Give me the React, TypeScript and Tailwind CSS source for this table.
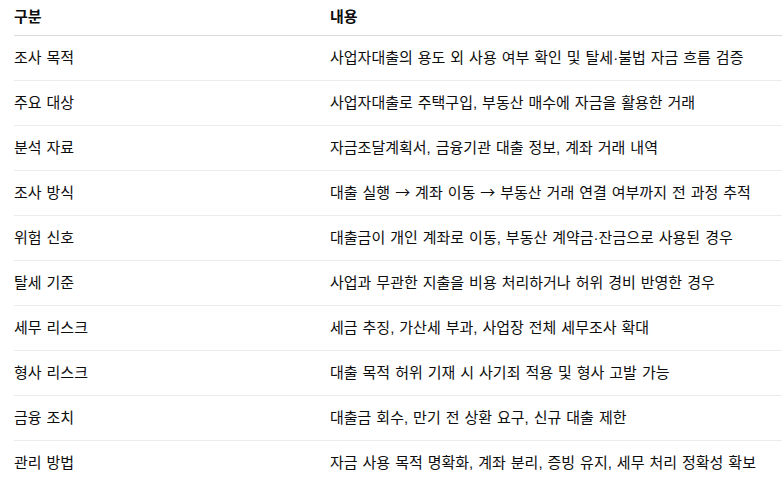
const rows: [string, string][] = [
  ['조사 목적', '사업자대출의 용도 외 사용 여부 확인 및 탈세·불법 자금 흐름 검증'],
  ['주요 대상', '사업자대출로 주택구입, 부동산 매수에 자금을 활용한 거래'],
  ['분석 자료', '자금조달계획서, 금융기관 대출 정보, 계좌 거래 내역'],
  ['조사 방식', '대출 실행 → 계좌 이동 → 부동산 거래 연결 여부까지 전 과정 추적'],
  ['위험 신호', '대출금이 개인 계좌로 이동, 부동산 계약금·잔금으로 사용된 경우'],
  ['탈세 기준', '사업과 무관한 지출을 비용 처리하거나 허위 경비 반영한 경우'],
  ['세무 리스크', '세금 추징, 가산세 부과, 사업장 전체 세무조사 확대'],
  ['형사 리스크', '대출 목적 허위 기재 시 사기죄 적용 및 형사 고발 가능'],
  ['금융 조치', '대출금 회수, 만기 전 상환 요구, 신규 대출 제한'],
  ['관리 방법', '자금 사용 목적 명확화, 계좌 분리, 증빙 유지, 세무 처리 정확성 확보'],
]

export default function App() {
  return (
    <div className="w-[784px] h-[494px] overflow-hidden bg-white pl-[14px] text-[15px] [word-spacing:0.8px] text-[#0d0d0d] font-['Liberation_Sans','Noto_Sans_CJK_KR',sans-serif]">
      <div className="w-[768px]">
        <div className="grid grid-cols-[316px_1fr] h-[36px] items-center border-b border-[#d9d9d9] font-bold">
          <div>구분</div>
          <div>내용</div>
        </div>
        {rows.map(([k, v], i) => (
          <div
            key={k}
            className={`grid grid-cols-[316px_1fr] h-[45px] items-center ${i < rows.length - 1 ? 'border-b border-[#ececec]' : ''}`}
          >
            <div>{k}</div>
            <div className="whitespace-nowrap">
              {v.split('→').map((part, j) => (
                <span key={j}>
                  {j > 0 && <span className="font-['Noto_Sans_CJK_KR',sans-serif]">→</span>}
                  {part}
                </span>
              ))}
            </div>
          </div>
        ))}
      </div>
    </div>
  )
}
